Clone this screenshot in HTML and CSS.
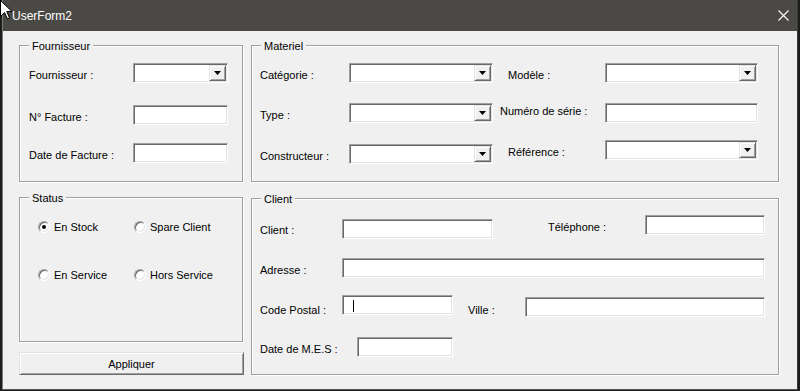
FILE: index.html
```html
<!DOCTYPE html>
<html lang="fr">
<head>
    <meta charset="UTF-8">
    <title>UserForm2</title>
    <link rel="stylesheet" href="styles.css">
</head>
<body>
<div class="window">
    <div class="titlebar">
        <span class="title">UserForm2</span>
        <svg class="close" width="11" height="11" viewBox="0 0 11 11">
            <path d="M0.5 0.5 L10.5 10.5 M10.5 0.5 L0.5 10.5" stroke="#fff" stroke-width="1.1" fill="none"/>
        </svg>
    </div>

    <div class="client-area">
        <!-- left column -->
        <div class="column">
            <div class="frame fournisseur">
                <span class="legend">Fournisseur</span>
                <div class="row gap-17">
                    <span class="lbl">Fournisseur :</span>
                    <div class="box combo"><span class="drop"></span></div>
                </div>
                <div class="row gap-22">
                    <span class="lbl">N° Facture :</span>
                    <div class="box"></div>
                </div>
                <div class="row gap-18">
                    <span class="lbl">Date de Facture :</span>
                    <div class="box"></div>
                </div>
            </div>

            <div class="frame status">
                <span class="legend">Status</span>
                <div class="radio-row first">
                    <label class="option"><span class="radio checked"></span>En Stock</label>
                    <label class="option"><span class="radio"></span>Spare Client</label>
                </div>
                <div class="radio-row second">
                    <label class="option"><span class="radio"></span>En Service</label>
                    <label class="option"><span class="radio"></span>Hors Service</label>
                </div>
            </div>

            <button class="btn">Appliquer</button>
        </div>

        <!-- right column -->
        <div class="column">
            <div class="frame materiel">
                <span class="legend">Materiel</span>
                <div class="sub left">
                    <div class="row gap-17">
                        <span class="lbl">Catégorie :</span>
                        <div class="box combo"><span class="drop"></span></div>
                    </div>
                    <div class="row gap-20">
                        <span class="lbl">Type :</span>
                        <div class="box combo"><span class="drop"></span></div>
                    </div>
                    <div class="row gap-21">
                        <span class="lbl">Constructeur :</span>
                        <div class="box combo"><span class="drop"></span></div>
                    </div>
                </div>
                <div class="sub right">
                    <div class="row gap-17">
                        <span class="lbl indent">Modèle :</span>
                        <div class="box combo"><span class="drop"></span></div>
                    </div>
                    <div class="row gap-20">
                        <span class="lbl high">Numéro de série :</span>
                        <div class="box"></div>
                    </div>
                    <div class="row gap-17">
                        <span class="lbl indent">Référence :</span>
                        <div class="box combo"><span class="drop"></span></div>
                    </div>
                </div>
            </div>

            <div class="frame client">
                <span class="legend">Client</span>
                <div class="row gap-16">
                    <span class="lbl low">Client :</span>
                    <div class="box client-box"></div>
                    <span class="lbl tel-lbl">Téléphone :</span>
                    <div class="box tel-box flush"></div>
                </div>
                <div class="row gap-19">
                    <span class="lbl">Adresse :</span>
                    <div class="box adresse-box flush"></div>
                </div>
                <div class="row gap-17">
                    <span class="lbl low">Code Postal :</span>
                    <div class="box cp-box flush"><span class="caret"></span></div>
                    <span class="lbl low ville-lbl">Ville :</span>
                    <div class="box ville-box"></div>
                </div>
                <div class="row gap-20">
                    <span class="lbl mes-lbl">Date de M.E.S :</span>
                    <div class="box mes-box flush"></div>
                </div>
            </div>
        </div>
    </div>
</div>

<!-- mouse pointer left over the title bar -->
<svg class="pointer" width="13" height="20" viewBox="0 0 13 20">
    <path d="M0.5 0.5 L0.5 16.5 L4.5 12.5 L7.5 19 L9.5 18 L6.8 11.5 L12 11.5 Z" fill="#fff" stroke="#000" stroke-width="1"/>
</svg>
</body>
</html>
```

FILE: styles.css
```css
/* General styles */
*, *::before, *::after {
    box-sizing: border-box;
}

body {
    margin: 0;
    position: relative;
    background-color: #1c1c1c;
    font-family: 'Liberation Sans', Arial, sans-serif;
    font-size: 11px;
    color: #000;
}

/* Window */
.window {
    margin-left: 2px;
    width: 796px;
    height: 390px;
    background-color: #f0f0f0;
    border-left: 1px solid #7d7d7d;
    border-right: 1px solid #3a3a3a;
    border-bottom: 1px solid #555;
}

.titlebar {
    height: 31px;
    background-color: #4b4946;
    color: #fff;
    display: flex;
    align-items: center;
    justify-content: space-between;
    padding: 0 8px 0 9px;
}

.title {
    font-size: 12px;
    margin-top: 1px;
}

.client-area {
    display: grid;
    grid-template-columns: 224px 528px;
    column-gap: 8px;
    padding: 14px 0 0 16px;
}

.column {
    display: flex;
    flex-direction: column;
}

/* Group boxes */
.frame {
    position: relative;
    border: 1px solid #a0a0a0;
    box-shadow: inset 1px 1px #fff, 1px 1px #fff;
}

.legend {
    position: absolute;
    top: -7px;
    left: 9px;
    padding: 0 3px;
    line-height: 14px;
    background-color: #f0f0f0;
}

.fournisseur {
    height: 137px;
    padding-left: 9px;
}

.status {
    height: 145px;
    margin-top: 15px;
    padding-left: 18px;
}

.materiel {
    height: 137px;
    display: flex;
}

.client {
    height: 177px;
    margin-top: 16px;
    padding-left: 8px;
}

/* Rows */
.row {
    display: flex;
    align-items: flex-start;
}

.gap-16 { margin-top: 16px; }
.gap-17 { margin-top: 17px; }
.gap-18 { margin-top: 18px; }
.gap-19 { margin-top: 19px; }
.gap-20 { margin-top: 20px; }
.gap-21 { margin-top: 21px; }
.gap-22 { margin-top: 22px; }

.lbl {
    flex: none;
    line-height: 14px;
    margin-top: 5px;
    white-space: nowrap;
}

.lbl.low { margin-top: 8px; }
.lbl.high { margin-top: 1px; }
.lbl.indent { padding-left: 8px; }

/* Sunken text box */
.box {
    flex: none;
    height: 20px;
    background-color: #fff;
    border: 1px solid;
    border-color: #a0a0a0 #fff #fff #a0a0a0;
    box-shadow: inset 1px 1px #696969, inset -1px -1px #e3e3e3;
}

.combo {
    display: flex;
    justify-content: flex-end;
    padding: 1px;
}

.drop {
    width: 17px;
    height: 16px;
    display: flex;
    align-items: center;
    justify-content: center;
    background-color: #f0f0f0;
    border: 1px solid;
    border-color: #e3e3e3 #696969 #696969 #e3e3e3;
    box-shadow: inset 1px 1px #fff, inset -1px -1px #a0a0a0;
}

.drop::after {
    content: "";
    width: 7px;
    height: 4px;
    background-color: #000;
    clip-path: polygon(0 0, 100% 0, 50% 100%);
}

/* Fournisseur frame */
.fournisseur .lbl { width: 104px; }
.fournisseur .box { width: 95px; }

/* Materiel frame */
.sub.left { padding-left: 8px; }
.sub.left .lbl { width: 89px; }
.sub.left .box { width: 144px; }

.sub.right { margin-left: 7px; }
.sub.right .lbl { width: 105px; }
.sub.right .box { width: 153px; }

/* Client frame */
.client .lbl { width: 82px; }
.client .box { margin-top: 4px; }
.client .box.flush { margin-top: 0; }
.client .ville-box { margin-top: 2px; }

.client-box { width: 151px; }
.client .tel-lbl { width: 97px; margin-left: 55px; }
.tel-box { width: 120px; }
.adresse-box { width: 423px; }
.cp-box { width: 111px; display: flex; }
.client .ville-lbl { width: 57px; margin-left: 15px; }
.ville-box { width: 240px; }
.client .mes-lbl { width: 97px; }
.mes-box { width: 96px; }

.caret {
    width: 1px;
    height: 12px;
    margin: 4px 0 0 10px;
    background-color: #000;
}

/* Status radios */
.radio-row {
    display: flex;
    height: 12px;
}

.radio-row.first { margin-top: 23px; }
.radio-row.second { margin-top: 36px; }

.option {
    width: 96px;
    display: flex;
    align-items: center;
    line-height: 14px;
}

.radio {
    position: relative;
    width: 12px;
    height: 12px;
    margin-right: 4px;
    border-radius: 50%;
    background-color: #fff;
    border: 1px solid;
    border-color: #a0a0a0 #fff #fff #a0a0a0;
    box-shadow: inset 1px 1px #696969, inset -1px -1px #e3e3e3;
}

.radio.checked::after {
    content: "";
    position: absolute;
    left: 3px;
    top: 3px;
    width: 4px;
    height: 4px;
    border-radius: 50%;
    background-color: #000;
}

/* Button */
.btn {
    width: 225px;
    height: 23px;
    margin-top: 10px;
    padding: 0;
    font-family: inherit;
    font-size: 11px;
    color: #000;
    background-color: #f0f0f0;
    border: 1px solid;
    border-color: #e3e3e3 #696969 #696969 #e3e3e3;
    box-shadow: inset 1px 1px #fff, inset -1px -1px #a0a0a0;
}

.pointer {
    position: absolute;
    top: 0;
    left: 0;
}
```
